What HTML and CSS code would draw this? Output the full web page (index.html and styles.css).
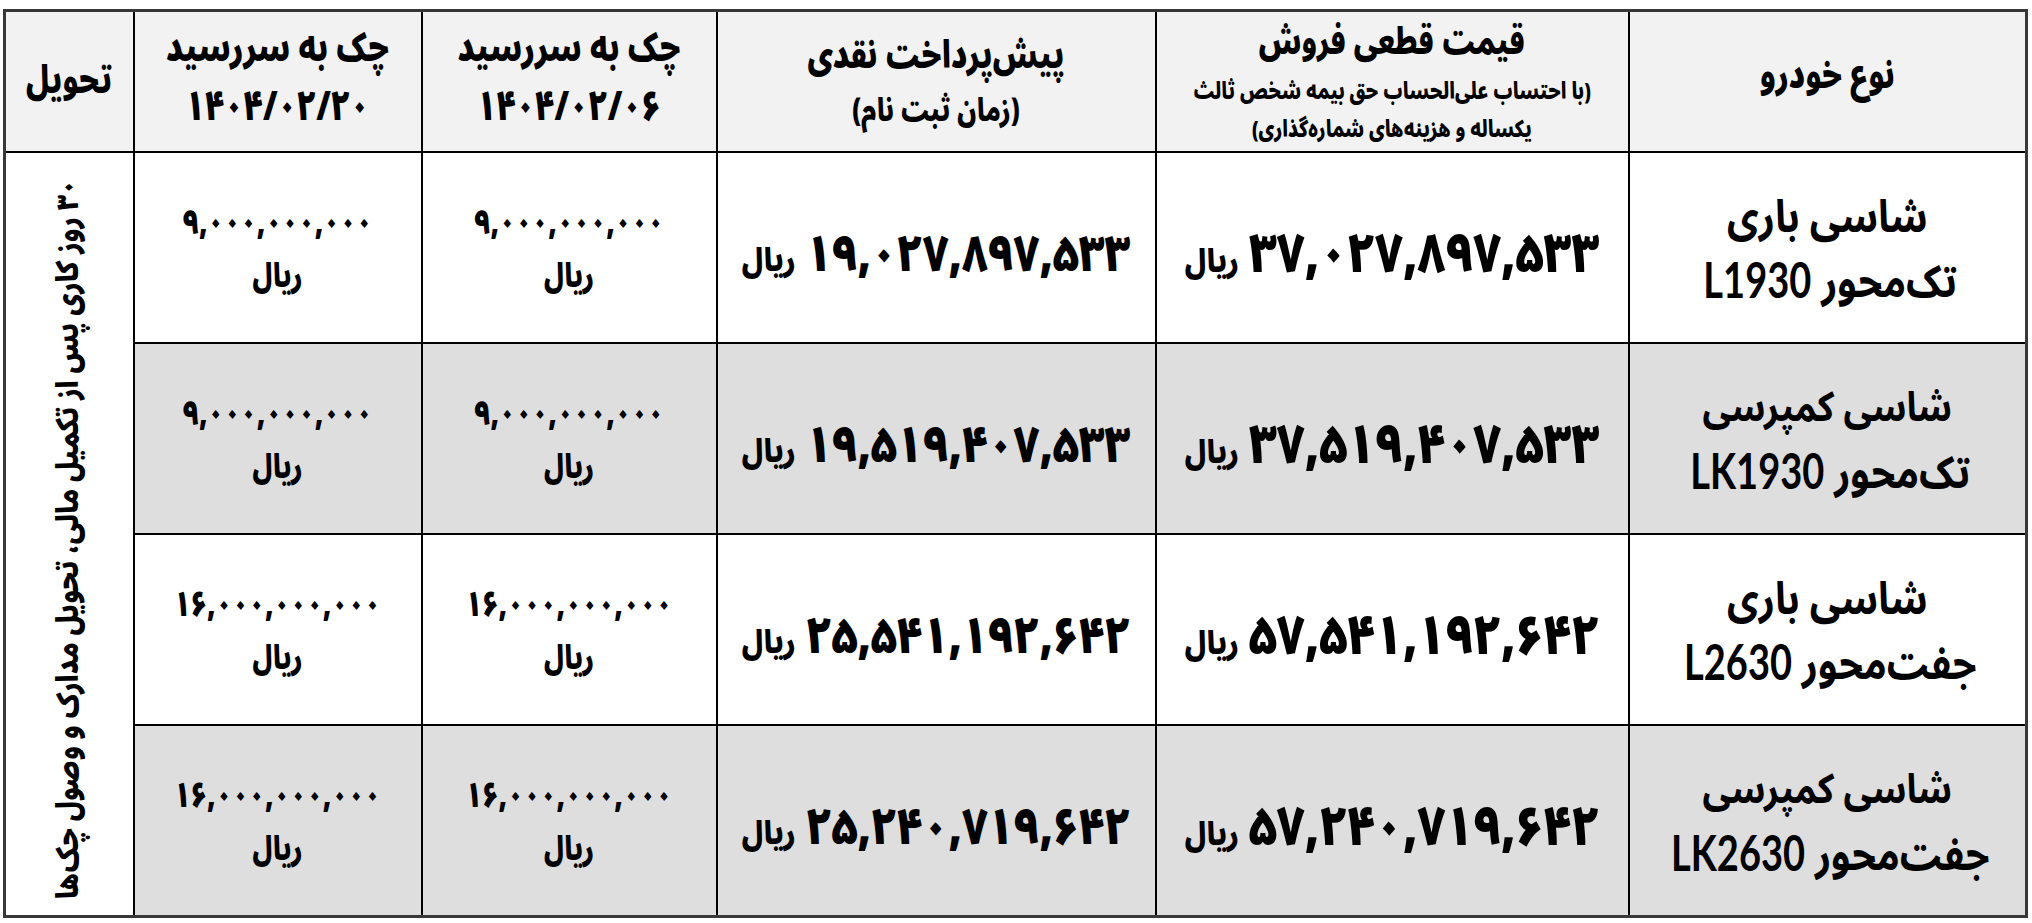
FILE: index.html
```html
<!DOCTYPE html>
<html lang="fa">
<head>
<meta charset="utf-8">
<title>جدول قیمت</title>
<link rel="stylesheet" href="styles.css">
</head>
<body>
<div class="sheet">
<table class="price-table" dir="rtl">
  <colgroup>
    <col class="c-type"><col class="c-price"><col class="c-pre"><col class="c-chk1"><col class="c-chk2"><col class="c-del">
  </colgroup>
  <thead>
    <tr class="head">
      <th><div class="st st-up"><div class="h-main h-type">نوع خودرو</div></div></th>
      <th><div class="st">
        <div class="h-main h-price">قیمت قطعی فروش</div>
        <div class="h-sub">(با احتساب علی‌الحساب حق بیمه شخص ثالث</div>
        <div class="h-sub">یکساله و هزینه‌های شماره‌گذاری)</div>
      </div></th>
      <th><div class="st">
        <div class="h-main h-pre">پیش‌پرداخت نقدی</div>
        <div class="h-sub2">(زمان ثبت نام)</div>
      </div></th>
      <th><div class="st st-up">
        <div class="h-main h-chk">چک به سررسید</div>
        <div class="h-date">۱۴۰۴/۰۲/۰۶</div>
      </div></th>
      <th><div class="st st-up">
        <div class="h-main h-chk">چک به سررسید</div>
        <div class="h-date">۱۴۰۴/۰۲/۲۰</div>
      </div></th>
      <th><div class="st"><div class="h-main h-del">تحویل</div></div></th>
    </tr>
  </thead>
  <tbody>
    <tr class="row">
      <td><div class="sc"><div>شاسی باری</div><div>تک‌محور <span class="model">L1930</span></div></div></td>
      <td><div class="sa"><span class="amount">۳۷,۰۲۷,۸۹۷,۵۳۳</span> <span class="rial">ریال</span></div></td>
      <td><div class="sa"><span class="amount pre">۱۹,۰۲۷,۸۹۷,۵۳۳</span> <span class="rial">ریال</span></div></td>
      <td><div class="st"><div class="chk">۹,۰۰۰,۰۰۰,۰۰۰</div><div class="chk-rial">ریال</div></div></td>
      <td><div class="st"><div class="chk">۹,۰۰۰,۰۰۰,۰۰۰</div><div class="chk-rial">ریال</div></div></td>
      <td class="delivery" rowspan="4"><div class="vbox"><div class="vtext">۳۰ روز کاری پس از تکمیل مالی، تحویل مدارک و وصول چک‌ها</div></div></td>
    </tr>
    <tr class="row alt">
      <td><div class="sc"><div class="wide">شاسی کمپرسی</div><div>تک‌محور <span class="model">LK1930</span></div></div></td>
      <td><div class="sa"><span class="amount">۳۷,۵۱۹,۴۰۷,۵۳۳</span> <span class="rial">ریال</span></div></td>
      <td><div class="sa"><span class="amount pre">۱۹,۵۱۹,۴۰۷,۵۳۳</span> <span class="rial">ریال</span></div></td>
      <td><div class="st"><div class="chk">۹,۰۰۰,۰۰۰,۰۰۰</div><div class="chk-rial">ریال</div></div></td>
      <td><div class="st"><div class="chk">۹,۰۰۰,۰۰۰,۰۰۰</div><div class="chk-rial">ریال</div></div></td>
    </tr>
    <tr class="row">
      <td><div class="sc"><div>شاسی باری</div><div>جفت‌محور <span class="model">L2630</span></div></div></td>
      <td><div class="sa"><span class="amount">۵۷,۵۴۱,۱۹۲,۶۴۲</span> <span class="rial">ریال</span></div></td>
      <td><div class="sa"><span class="amount pre">۲۵,۵۴۱,۱۹۲,۶۴۲</span> <span class="rial">ریال</span></div></td>
      <td><div class="st"><div class="chk">۱۶,۰۰۰,۰۰۰,۰۰۰</div><div class="chk-rial">ریال</div></div></td>
      <td><div class="st"><div class="chk">۱۶,۰۰۰,۰۰۰,۰۰۰</div><div class="chk-rial">ریال</div></div></td>
    </tr>
    <tr class="row alt">
      <td><div class="sc"><div class="wide">شاسی کمپرسی</div><div>جفت‌محور <span class="model">LK2630</span></div></div></td>
      <td><div class="sa"><span class="amount">۵۷,۲۴۰,۷۱۹,۶۴۲</span> <span class="rial">ریال</span></div></td>
      <td><div class="sa"><span class="amount pre">۲۵,۲۴۰,۷۱۹,۶۴۲</span> <span class="rial">ریال</span></div></td>
      <td><div class="st"><div class="chk">۱۶,۰۰۰,۰۰۰,۰۰۰</div><div class="chk-rial">ریال</div></div></td>
      <td><div class="st"><div class="chk">۱۶,۰۰۰,۰۰۰,۰۰۰</div><div class="chk-rial">ریال</div></div></td>
    </tr>
  </tbody>
</table>
</div>
</body>
</html>
```
FILE: styles.css
```css
html, body {
  margin: 0;
  padding: 0;
  background: #ffffff;
}

.sheet {
  padding: 9px 6px 0 3px;
}

.price-table {
  width: 2023px;
  border-collapse: collapse;
  table-layout: fixed;
  border: 3px solid #383838;
  color: #000;
  font-family: "Noto Sans Arabic", "DejaVu Sans", sans-serif;
  font-weight: 900;
}

.c-type { width: 398px; }
.c-price { width: 473px; }
.c-pre { width: 439px; }
.c-chk1 { width: 295px; }
.c-chk2 { width: 288px; }
.c-del { width: 129px; }

.price-table th,
.price-table td {
  border: 2px solid #000;
  padding: 0;
  text-align: center;
  vertical-align: middle;
  overflow: visible;
}

.price-table thead th {
  background: #f2f2f2;
  height: 139px;
  font-weight: 900;
}

.row td { height: 189px; background: #ffffff; }
.row.alt td { background: #dedede; }
.row td.delivery { background: #ffffff; }

/* the reference sheet is stretched vertically */
.st {
  display: inline-block;
  transform: scaleY(1.25);
  white-space: nowrap;
}
.st-up { padding-bottom: 7px; }

.sa {
  display: inline-block;
  transform: scaleY(1.15);
  white-space: nowrap;
  padding-top: 18px;
}

.sc {
  display: inline-block;
  transform: scaleY(1.15);
  font-family: "Noto Sans Arabic", sans-serif;
  font-weight: 700;
  font-size: 39px;
  line-height: 57px;
  white-space: nowrap;
  padding-top: 4px;
}
.sc .wide { font-size: 36px; }

.model {
  display: inline-block;
  font-family: "Lato", "Liberation Sans", sans-serif;
  font-weight: 700;
  font-size: 38px;
  line-height: 40px;
  transform: scaleY(1.12);
  transform-origin: 50% 80%;
  margin-left: 6px;
}

.h-main {
  font-size: 31px;
  line-height: 46px;
}
.h-type { font-size: 30px; }
.h-chk { font-size: 31px; line-height: 48px; }
.h-pre { font-size: 30px; }
.h-price {
  font-size: 29px;
  line-height: 48px;
}
.h-sub {
  font-size: 18.5px;
  line-height: 31px;
}
.h-sub2 {
  font-size: 25px;
  line-height: 40px;
}
.h-date {
  font-size: 33px;
  line-height: 46px;
  letter-spacing: 2px;
}
.h-del { font-size: 30px; }

.amount {
  font-size: 47.5px;
  line-height: 60px;
}
.amount.pre { font-size: 44px; }
.rial {
  font-size: 28px;
  margin-right: 6px;
}

.chk {
  font-size: 28px;
  line-height: 42px;
  padding-top: 5px;
}
.chk-rial {
  font-size: 26px;
  line-height: 42px;
}

.vbox {
  height: 740px;
  padding-top: 12px;
  display: flex;
  align-items: center;
  justify-content: center;
}

.vtext {
  writing-mode: vertical-rl;
  transform: rotate(180deg) scaleY(0.87);
  font-size: 30px;
  line-height: 40px;
  white-space: nowrap;
}
```
